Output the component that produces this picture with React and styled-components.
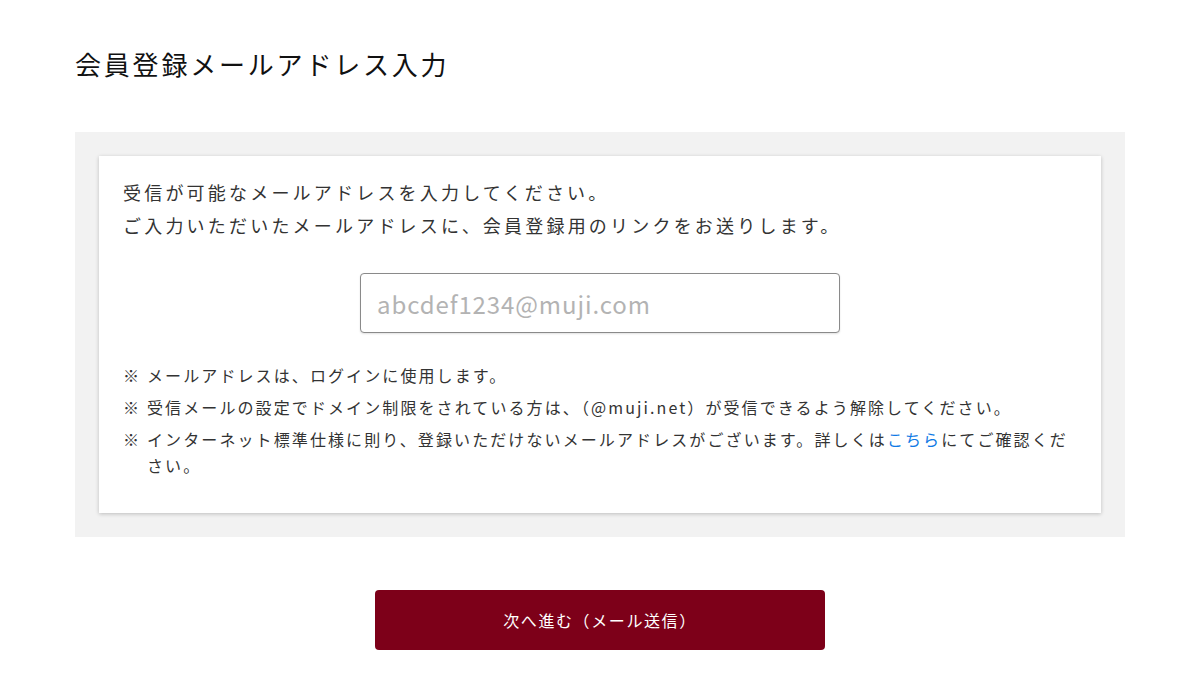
import React from "react";
import styled, { createGlobalStyle } from "styled-components";

const GlobalStyle = createGlobalStyle`
    body{
        margin:0;
        background:#ffffff;
        color:#333333;
        font-family:"Noto Sans CJK JP", "Noto Sans", sans-serif;
    }
`;

const Page = styled.div`
    width:1050px;
    margin:0 auto;
    padding:40px 0 0 0;
`;

const Title = styled.h1`
    margin:0 0 44px 0;
    font-size:26px;
    line-height:48px;
    font-weight:400;
    letter-spacing:2.8px;
    color:#111111;
`;

const Panel = styled.div`
    background:#f2f2f2;
    padding:24px;
`;

const Card = styled.div`
    background:#ffffff;
    box-shadow:0 1px 4px rgba(0,0,0,0.22);
    padding:20px 24px 35px 24px;
`;

const Intro = styled.p`
    margin:0;
    font-size:18px;
    line-height:33px;
    letter-spacing:3.2px;
    color:#333333;
`;

const InputRow = styled.div`
    display:flex;
    justify-content:center;
    margin:31px 0 29px 0;
`;

const EmailInput = styled.input`
    box-sizing:border-box;
    width:480px;
    height:60px;
    padding:0 16px;
    border:1px solid #8a8a8a;
    border-radius:4px;
    box-shadow:0 1px 2px rgba(0,0,0,0.12);
    font-family:inherit;
    font-size:24px;
    letter-spacing:0.9px;
    color:#333333;
    outline:none;

    &::placeholder{
        color:#b3b3b3;
    }
`;

const Notes = styled.ul`
    margin:0;
    padding:0;
    list-style:none;
`;

const Note = styled.li`
    position:relative;
    padding-left:24px;
    font-size:16px;
    line-height:26px;
    letter-spacing:2.1px;
    color:#333333;

    & + &{
        margin-top:6px;
    }

    &::before{
        content:"※";
        position:absolute;
        left:0;
        top:0;
    }
`;

const Link = styled.a`
    color:#0f7ae5;
    text-decoration:none;
`;

const Actions = styled.div`
    display:flex;
    justify-content:center;
    padding:53px 0 0 0;
`;

const Button = styled.button`
    width:450px;
    height:60px;
    border:none;
    border-radius:4px;
    background:#7d0019;
    color:#ffffff;
    font-family:inherit;
    font-size:16px;
    letter-spacing:1.6px;
    cursor:pointer;
`;

const App = () => {
    return (
        <>
            <GlobalStyle />
            <Page>
                <Title>会員登録メールアドレス入力</Title>
                <Panel>
                    <Card>
                        <Intro>
                            受信が可能なメールアドレスを入力してください。<br />
                            ご入力いただいたメールアドレスに、会員登録用のリンクをお送りします。
                        </Intro>
                        <InputRow>
                            <EmailInput type="email" placeholder="abcdef1234@muji.com" />
                        </InputRow>
                        <Notes>
                            <Note>メールアドレスは、ログインに使用します。</Note>
                            <Note>受信メールの設定でドメイン制限をされている方は、（@muji.net）が受信できるよう解除してください。</Note>
                            <Note>
                                インターネット標準仕様に則り、登録いただけないメールアドレスがございます。詳しくは<Link href="#">こちら</Link>にてご確認ください。
                            </Note>
                        </Notes>
                    </Card>
                </Panel>
                <Actions>
                    <Button>次へ進む（メール送信）</Button>
                </Actions>
            </Page>
        </>
    );
}

export default App;
